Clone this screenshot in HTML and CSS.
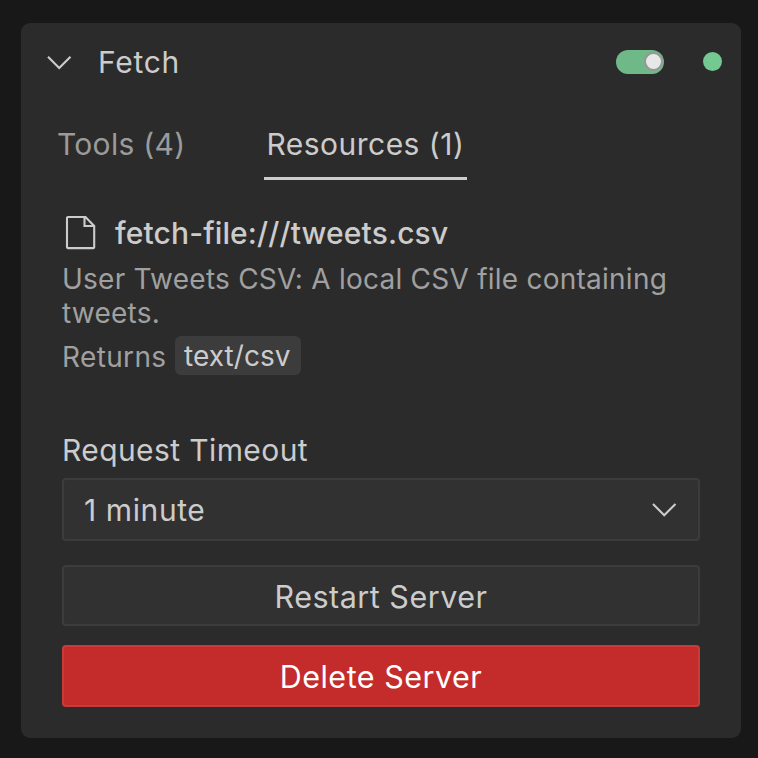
FILE: index.html
```html
<!DOCTYPE html>
<html lang="en">
<head>
<meta charset="utf-8">
<title>Fetch</title>
<link rel="stylesheet" href="styles.css">
</head>
<body>
<main class="card">
  <header class="head">
    <svg class="chev" width="26" height="16" viewBox="0 0 26 16"><path d="M2 2.7 L13.2 14 L24.5 2.7"/></svg>
    <h1 class="title"><span>Fetch</span></h1>
    <span class="toggle"><span class="knob"></span></span>
    <span class="dot"></span>
  </header>
  <nav class="tabs">
    <a class="tab tools">Tools (4)</a>
    <a class="tab active">Resources (1)</a>
  </nav>
  <section class="resource">
    <div class="uri">
      <svg class="file" width="32" height="36" viewBox="0 0 32 36"><path d="M3 2H20.5L29.2 11V32.3a.8.8 0 0 1-.8.8H3a1 1 0 0 1-1-1V3a1 1 0 0 1 1-1ZM19.5 2V11H29"/></svg>
      <span>fetch-file:///tweets.csv</span>
    </div>
    <p class="desc">User Tweets CSV: A local CSV file containing tweets.</p>
    <div class="returns"><span class="word">Returns</span><code class="mime">text/csv</code></div>
  </section>
  <section class="settings">
    <label class="label">Request Timeout</label>
    <div class="select"><span>1 minute</span><svg class="chev" width="26" height="16" viewBox="0 0 26 16"><path d="M2 2 L13.2 13.2 L24.5 2"/></svg></div>
    <button class="btn restart">Restart Server</button>
    <button class="btn delete">Delete Server</button>
  </section>
</main>
</body>
</html>
```
FILE: styles.css
```css
* { box-sizing: border-box; }
body {
  margin: 0;
  height: 758px;
  padding: 23px 17px 20px 21px;
  background: #181818;
  color: #cccccc;
  font: 400 30px/34px Inter, sans-serif;
  overflow: hidden;
}
.card { height: 715px; background: #2b2b2b; border-radius: 9px; padding: 0 41px; }
.head { display: flex; align-items: center; height: 78px; margin: 0 -22px 0 -16px; }
.chev, .file { fill: none; stroke: #cccccc; stroke-width: 2.1; flex: none; }
.title { margin: 0 auto 0 26px; font-size: 30px; font-weight: 400; letter-spacing: 0.7px; }
.toggle { width: 48px; height: 24px; border-radius: 12px; background: #6fb988; padding: 2px 1px; display: flex; justify-content: flex-end; }
.knob { width: 19px; height: 19px; border-radius: 50%; border: 2px solid #979797; background: #e8e8e8; }
.dot { width: 19px; height: 19px; border-radius: 50%; background: #73c991; margin: -1px 0 0 39px; }
.tabs { display: flex; margin: 23px 0 0 -8px; }
.tab { padding: 3px 3px 15px; height: 56px; color: #9b9b9b; letter-spacing: 0.3px; white-space: nowrap; }
.tools { width: 210px; }
.active { width: 203px; padding-left: 2.5px; color: #cccccc; border-bottom: 3px solid #cccccc; letter-spacing: 0.47px; }
.resource { margin-top: 34px; }
.uri { display: flex; align-items: center; height: 38px; gap: 18px; padding-left: 3px; font-weight: 500; letter-spacing: 0.13px; }
.desc { margin: 10px 0 0; color: #a0a0a0; font-size: 28px; letter-spacing: 0.24px; }
.returns { display: flex; align-items: center; gap: 8px; margin-top: 6px; color: #a0a0a0; font-size: 28px; letter-spacing: 0.35px; }
.word { width: 105px; padding-top: 2px; }
.mime { height: 39px; width: 126px; padding: 3px 0 0 9px; border-radius: 6px; background: #3c3c3c; color: #cccccc; font: 400 28px/35px Inter, sans-serif; letter-spacing: 0.05px; }
.settings { margin-top: 58px; }
.label { display: block; letter-spacing: 0.4px; }
.select { height: 63px; margin: 11px 0 24px; padding: 1px 21px 0 20px; display: flex; align-items: center; justify-content: space-between; border: 2px solid #3c3c3c; border-radius: 4px; background: #313131; letter-spacing: 0.6px; }
.btn { display: block; width: 100%; height: 61px; padding: 2px 0 0; border: 2px solid #3c3c3c; border-radius: 4px; background: #313131; color: #cccccc; font: 400 30.5px/34px Inter, sans-serif; letter-spacing: 0.5px; }
.delete { margin-top: 19px; height: 62px; background: #c42b2b; border-color: #c93b3b; color: #fff; }
```
